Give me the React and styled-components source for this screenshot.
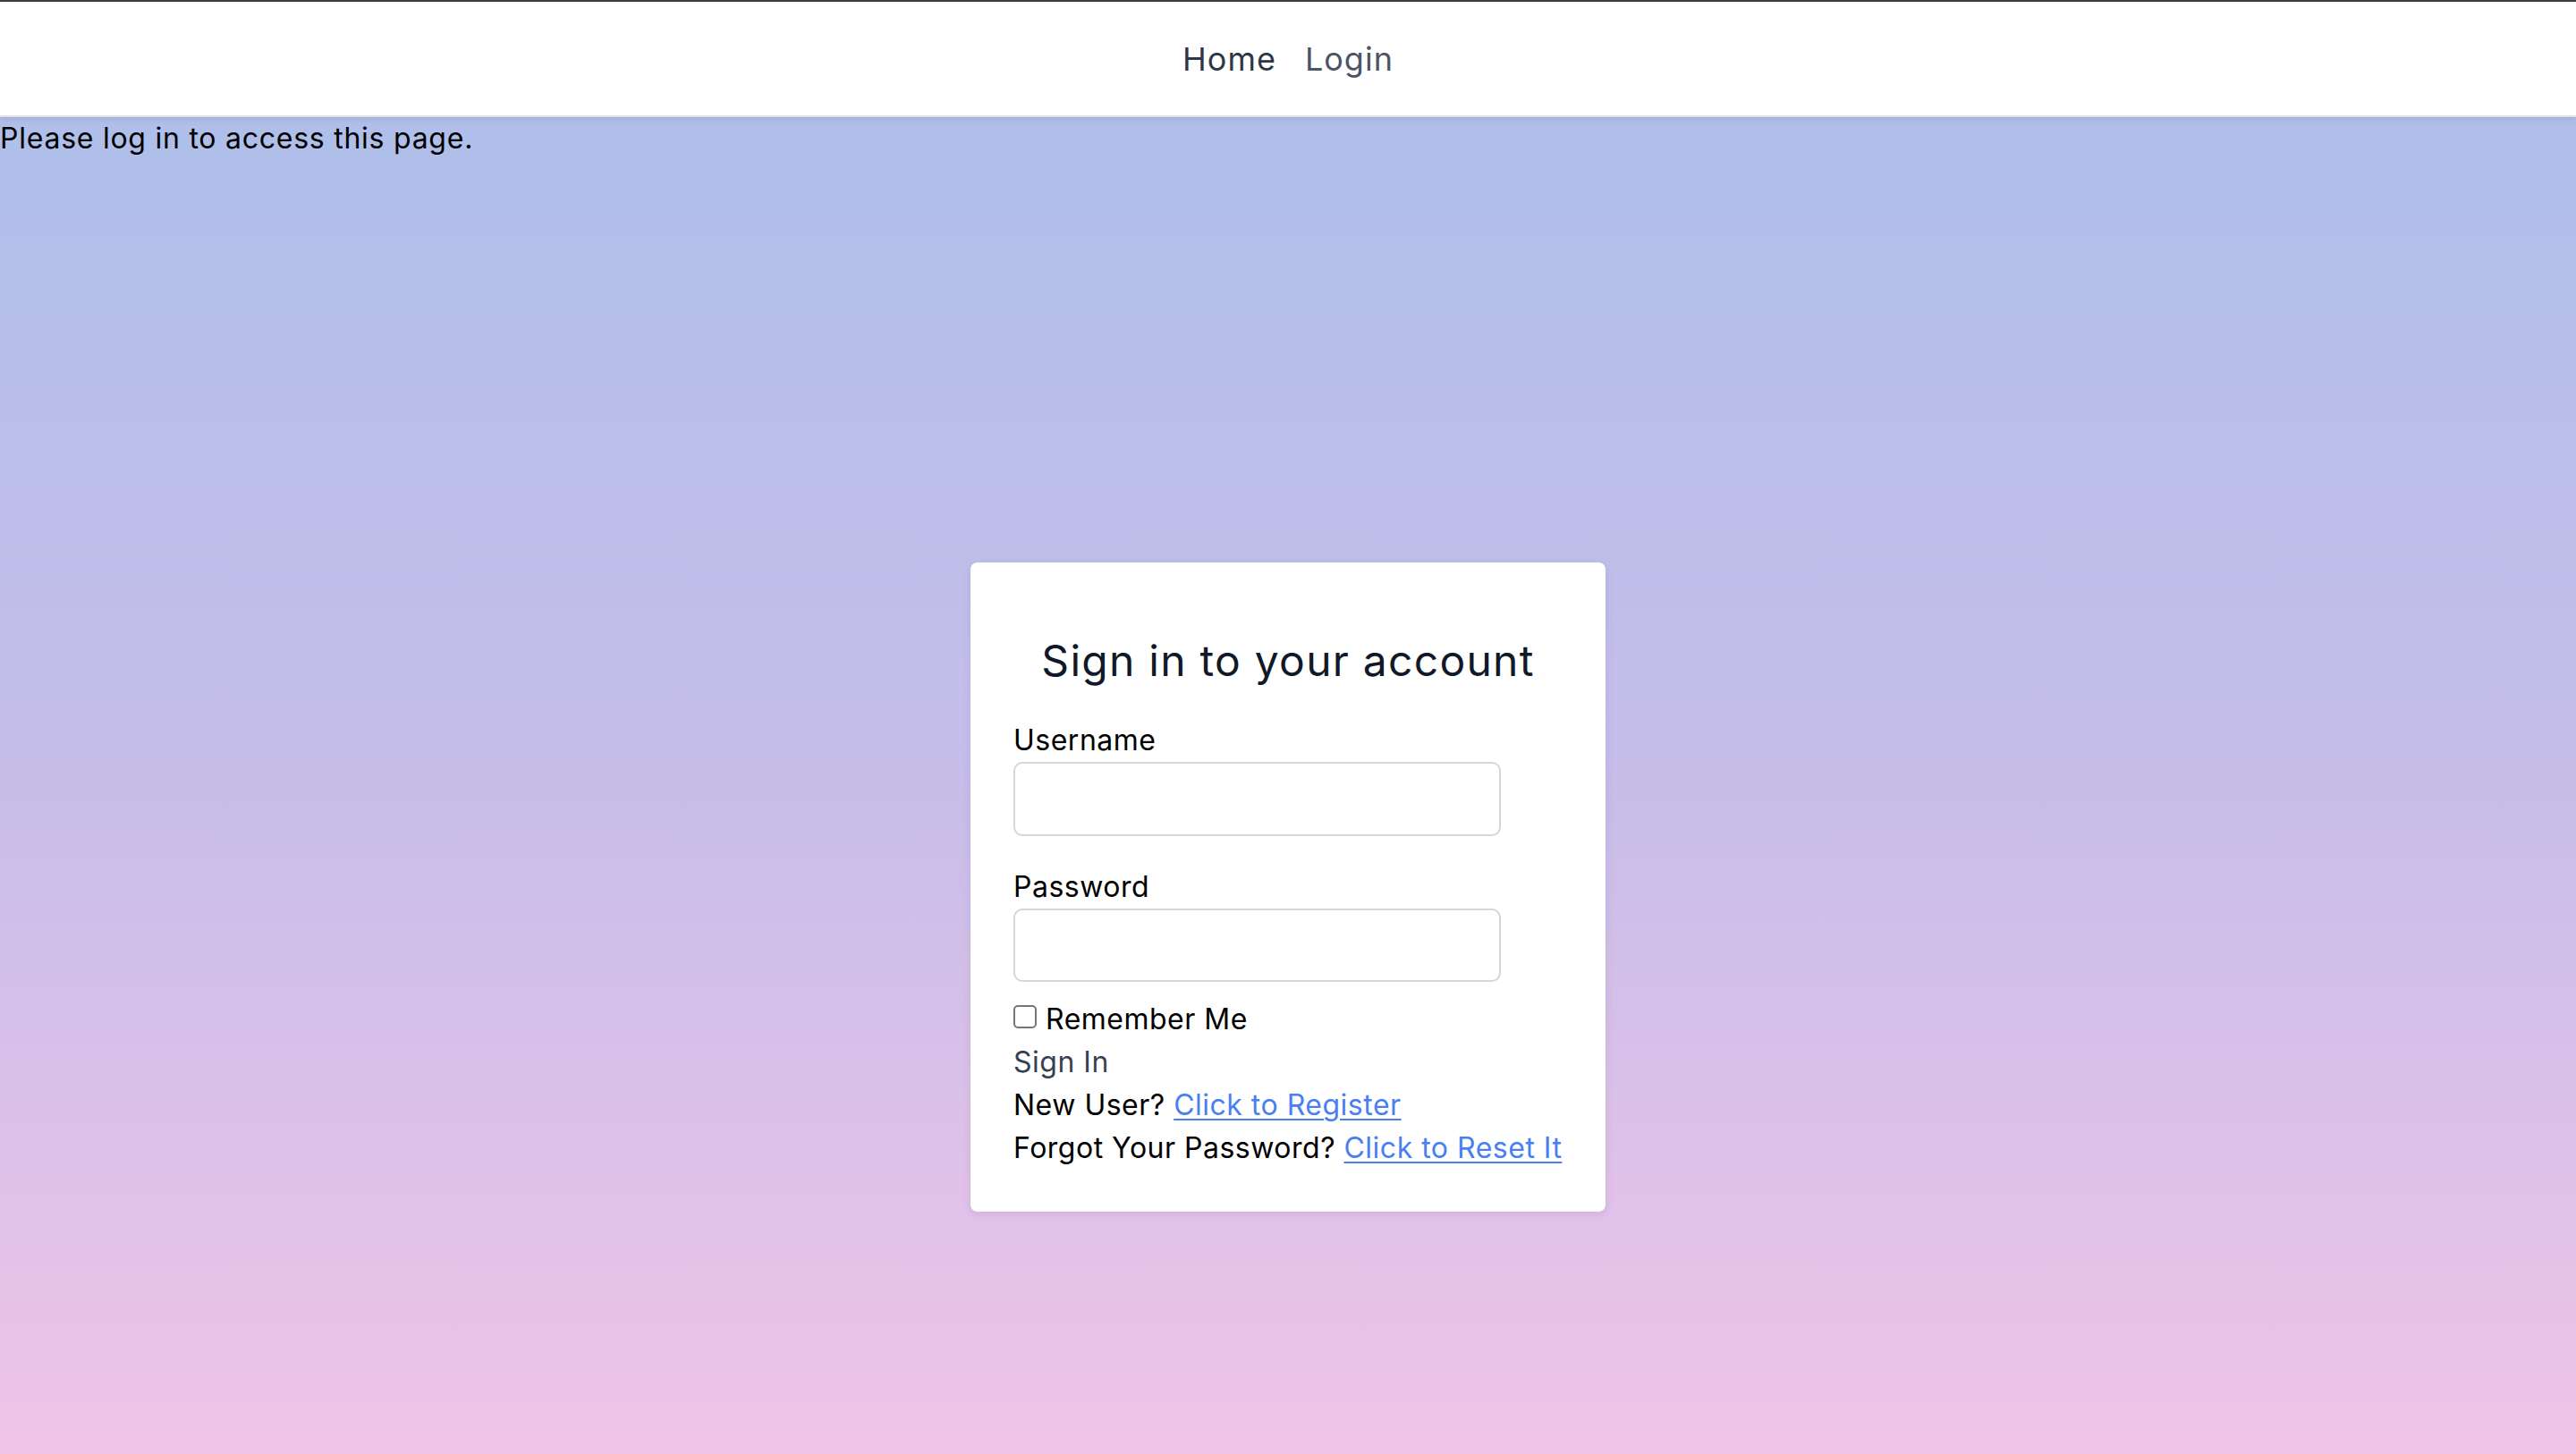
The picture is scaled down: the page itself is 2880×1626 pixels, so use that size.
import React from "react";
import styled, { createGlobalStyle } from "styled-components";

const GlobalStyle = createGlobalStyle`
  *, *::before, *::after { box-sizing: border-box; margin: 0; padding: 0; }
  html, body { background: #fff; }
  body {
    font-family: Inter, "Open Sans", "Liberation Sans", sans-serif;
    color: #000;
    -webkit-font-smoothing: antialiased;
  }
`;

const Page = styled.div`
  display: flex;
  flex-direction: column;
  min-height: 1626px;
`;

const NavBar = styled.nav`
  position: relative;
  z-index: 2;
  height: 131px;
  background: #fff;
  border-top: 2px solid #3e3e40;
  border-bottom: 2px solid #e2e2e4;
  box-shadow: 0 2px 6px rgba(40, 50, 90, 0.12);
  display: flex;
  align-items: center;
  justify-content: center;
  gap: 32px;
`;

const NavLink = styled.a`
  font-size: 36px;
  line-height: 54px;
  letter-spacing: 1px;
  color: ${(p) => (p.$active ? "#2e3748" : "#4a5466")};
  text-decoration: none;
  cursor: pointer;
`;

const Backdrop = styled.div`
  flex: 1;
  background: linear-gradient(
    to bottom,
    #afbfea 0px,
    #c7bde9 760px,
    #f0c4e8 1495px,
    #f2c4e8 1700px
  );
`;

const Notice = styled.p`
  font-size: 32px;
  line-height: 48px;
  letter-spacing: 0.75px;
  color: #000;
`;

const Main = styled.main`
  min-height: 1626px;
  display: flex;
  align-items: center;
  justify-content: center;
`;

const Card = styled.div`
  width: 710px;
  background: #fff;
  border-radius: 8px;
  padding: 74px 48px 47px;
  box-shadow: 0 3px 8px rgba(90, 60, 120, 0.12);
`;

const Title = styled.h2`
  font-size: 48px;
  line-height: 72px;
  font-weight: 400;
  letter-spacing: 1.25px;
  color: #111827;
  text-align: center;
  margin-bottom: 29px;
`;

const Form = styled.form`
  display: flex;
  flex-direction: column;
  font-size: 32px;
  line-height: 48px;
  letter-spacing: 0.5px;
`;

const Field = styled.div`
  display: flex;
  flex-direction: column;
  margin-bottom: ${(p) => p.$gap}px;
`;

const Label = styled.label`
  color: #000;
`;

const TextInput = styled.input`
  width: 545px;
  height: ${(p) => p.$h}px;
  border: 2px solid #d4d6db;
  border-radius: 10px;
  background: #fff;
  font-size: 32px;
  padding: 0 16px;
  outline: none;
`;

const CheckRow = styled.label`
  display: flex;
  align-items: flex-start;
  gap: 10px;
  color: #000;
`;

const Check = styled.input`
  appearance: none;
  flex: none;
  width: 26px;
  height: 26px;
  margin-top: 8px;
  border: 2.5px solid #767676;
  border-radius: 5px;
  background: #fff;
`;

const SubmitButton = styled.button`
  align-self: flex-start;
  background: none;
  border: none;
  font: inherit;
  letter-spacing: inherit;
  color: #374151;
  cursor: pointer;
`;

const Line = styled.p`
  color: #000;
`;

const Link = styled.a`
  color: #4a7ff0;
  text-decoration: underline;
  text-decoration-thickness: 2px;
  text-underline-offset: 4px;
  cursor: pointer;
`;

export default function App() {
  return (
    <>
      <GlobalStyle />
      <Page>
        <NavBar>
          <NavLink $active>Home</NavLink>
          <NavLink>Login</NavLink>
        </NavBar>
        <Backdrop>
          <Notice>Please log in to access this page.</Notice>
          <Main>
            <Card>
              <Title>Sign in to your account</Title>
              <Form onSubmit={(e) => e.preventDefault()}>
                <Field $gap={33}>
                  <Label htmlFor="username">Username</Label>
                  <TextInput id="username" type="text" $h={83} />
                </Field>
                <Field $gap={18}>
                  <Label htmlFor="password">Password</Label>
                  <TextInput id="password" type="password" $h={82} />
                </Field>
                <CheckRow>
                  <Check type="checkbox" />
                  Remember Me
                </CheckRow>
                <SubmitButton type="submit">Sign In</SubmitButton>
                <Line>
                  New User? <Link>Click to Register</Link>
                </Line>
                <Line>
                  Forgot Your Password? <Link>Click to Reset It</Link>
                </Line>
              </Form>
            </Card>
          </Main>
        </Backdrop>
      </Page>
    </>
  );
}
